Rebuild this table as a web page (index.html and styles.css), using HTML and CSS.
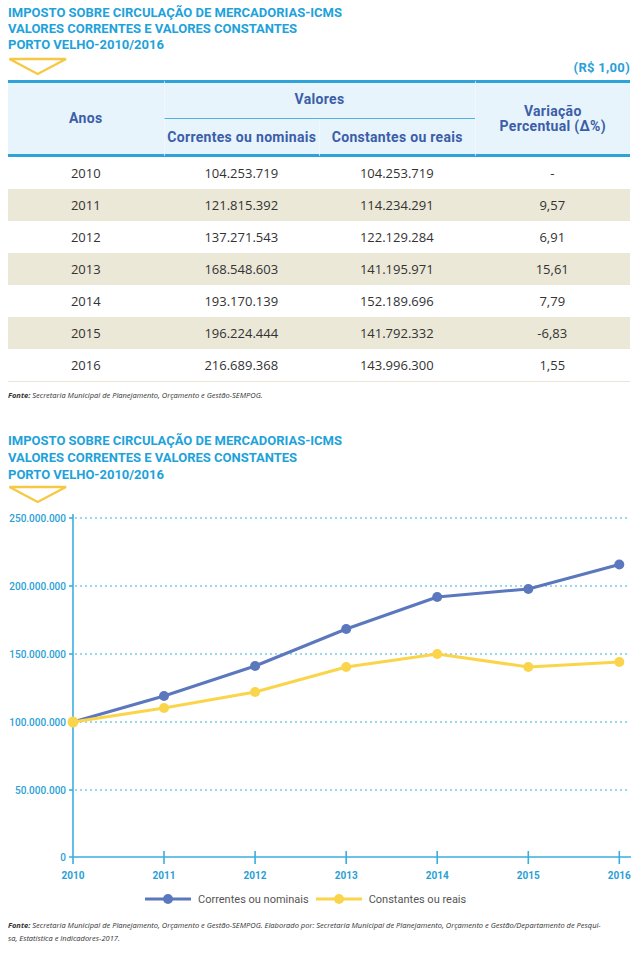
FILE: index.html
```html
<!DOCTYPE html>
<html lang="pt-BR">
<head>
<meta charset="utf-8">
<title>ICMS Porto Velho 2010/2016</title>
<link rel="stylesheet" href="styles.css">
</head>
<body>
<div class="page">
  <section class="block">
    <h1 class="title">IMPOSTO SOBRE CIRCULAÇÃO DE MERCADORIAS-ICMS<br>VALORES CORRENTES E VALORES CONSTANTES<br>PORTO VELHO-2010/2016</h1>
    <div class="marker-row">
      <svg class="marker" width="60" height="20" viewBox="0 0 60 20"><polygon points="1.5,2 58,2 29.7,17" fill="none" stroke="#f6c843" stroke-width="2.4"/></svg>
      <span class="unit">(R$ 1,00)</span>
    </div>
    <table class="data">
      <thead>
        <tr class="h1">
          <th rowspan="2" class="first">Anos</th>
          <th colspan="2" class="group"><span>Valores</span></th>
          <th rowspan="2">Variação<br>Percentual (Δ%)</th>
        </tr>
        <tr class="h2">
          <th>Correntes ou nominais</th>
          <th>Constantes ou reais</th>
        </tr>
      </thead>
      <tbody>
        <tr><td>2010</td><td>104.253.719</td><td>104.253.719</td><td>-</td></tr>
        <tr class="alt"><td>2011</td><td>121.815.392</td><td>114.234.291</td><td>9,57</td></tr>
        <tr><td>2012</td><td>137.271.543</td><td>122.129.284</td><td>6,91</td></tr>
        <tr class="alt"><td>2013</td><td>168.548.603</td><td>141.195.971</td><td>15,61</td></tr>
        <tr><td>2014</td><td>193.170.139</td><td>152.189.696</td><td>7,79</td></tr>
        <tr class="alt"><td>2015</td><td>196.224.444</td><td>141.792.332</td><td>-6,83</td></tr>
        <tr class="last"><td>2016</td><td>216.689.368</td><td>143.996.300</td><td>1,55</td></tr>
      </tbody>
    </table>
    <p class="source"><b>Fonte:</b> Secretaria Municipal de Planejamento, Orçamento e Gestão-SEMPOG.</p>
  </section>

  <section class="block chart-block">
    <h2 class="title title2">IMPOSTO SOBRE CIRCULAÇÃO DE MERCADORIAS-ICMS<br>VALORES CORRENTES E VALORES CONSTANTES<br>PORTO VELHO-2010/2016</h2>
    <svg class="marker marker2" width="60" height="20" viewBox="0 0 60 20"><polygon points="1.5,2 58,2 29.7,17" fill="none" stroke="#f6c843" stroke-width="2.4"/></svg>
    <svg class="chart" width="622" height="380" viewBox="8 505 622 380">
      <g class="grid" stroke="#3aaede" stroke-width="1" stroke-dasharray="2 3">
        <line x1="75" y1="518" x2="630" y2="518"/>
        <line x1="75" y1="586" x2="630" y2="586"/>
        <line x1="75" y1="654" x2="630" y2="654"/>
        <line x1="75" y1="722" x2="630" y2="722"/>
        <line x1="75" y1="790" x2="630" y2="790"/>
      </g>
      <g stroke="#3aaede" stroke-width="1.6">
        <line x1="73" y1="514" x2="73" y2="864"/>
        <line x1="69" y1="857" x2="631" y2="857"/>
        <line x1="69" y1="518" x2="73" y2="518"/>
        <line x1="69" y1="586" x2="73" y2="586"/>
        <line x1="69" y1="654" x2="73" y2="654"/>
        <line x1="69" y1="722" x2="73" y2="722"/>
        <line x1="69" y1="790" x2="73" y2="790"/>
        <line x1="164" y1="851" x2="164" y2="864"/>
        <line x1="255.1" y1="851" x2="255.1" y2="864"/>
        <line x1="346.2" y1="851" x2="346.2" y2="864"/>
        <line x1="437.2" y1="851" x2="437.2" y2="864"/>
        <line x1="528.3" y1="851" x2="528.3" y2="864"/>
        <line x1="619.3" y1="851" x2="619.3" y2="864"/>
      </g>
      <g class="ylab" text-anchor="end">
        <text x="66" y="521.5">250.000.000</text>
        <text x="66" y="589.5">200.000.000</text>
        <text x="66" y="657.5">150.000.000</text>
        <text x="66" y="725.5">100.000.000</text>
        <text x="66" y="793.5">50.000.000</text>
        <text x="66" y="860.5">0</text>
      </g>
      <g class="xlab" text-anchor="middle">
        <text x="73" y="879">2010</text>
        <text x="164" y="879">2011</text>
        <text x="255.1" y="879">2012</text>
        <text x="346.2" y="879">2013</text>
        <text x="437.2" y="879">2014</text>
        <text x="528.3" y="879">2015</text>
        <text x="619.3" y="879">2016</text>
      </g>
      <g class="series-blue">
        <polyline points="73,722 164,696 255.1,666 346.2,629 437.2,597 528.3,589 619.3,564.5" fill="none" stroke="#5b77bd" stroke-width="3" stroke-linejoin="round"/>
        <g fill="#5b77bd">
          <circle cx="164" cy="696" r="5"/>
          <circle cx="255.1" cy="666" r="5"/>
          <circle cx="346.2" cy="629" r="5"/>
          <circle cx="437.2" cy="597" r="5"/>
          <circle cx="528.3" cy="589" r="5"/>
          <circle cx="619.3" cy="564.5" r="5"/>
        </g>
      </g>
      <g class="series-yellow">
        <polyline points="73,722 164,708 255.1,692 346.2,667 437.2,654 528.3,667 619.3,662" fill="none" stroke="#fad54b" stroke-width="3" stroke-linejoin="round"/>
        <g fill="#fad54b">
          <circle cx="73" cy="722" r="5.5"/>
          <circle cx="164" cy="708" r="5"/>
          <circle cx="255.1" cy="692" r="5"/>
          <circle cx="346.2" cy="667" r="5"/>
          <circle cx="437.2" cy="654" r="5"/>
          <circle cx="528.3" cy="667" r="5"/>
          <circle cx="619.3" cy="662" r="5"/>
        </g>
      </g>
    </svg>
    <div class="legend">
      <div class="legend-item">
        <svg width="46" height="12" viewBox="0 0 46 12"><line x1="0" y1="6" x2="46" y2="6" stroke="#5b77bd" stroke-width="3"/><circle cx="23" cy="6" r="5" fill="#5b77bd"/></svg>
        <span>Correntes ou nominais</span>
      </div>
      <div class="legend-item">
        <svg width="46" height="12" viewBox="0 0 46 12"><line x1="0" y1="6" x2="46" y2="6" stroke="#fad54b" stroke-width="3"/><circle cx="23" cy="6" r="5" fill="#fad54b"/></svg>
        <span>Constantes ou reais</span>
      </div>
    </div>
    <p class="source source2"><b>Fonte:</b> Secretaria Municipal de Planejamento, Orçamento e Gestão-SEMPOG. Elaborado por: Secretaria Municipal de Planejamento, Orçamento e Gestão/Departamento de Pesqui-<br>sa, Estatística e Indicadores-2017.</p>
  </section>
</div>
</body>
</html>
```

FILE: styles.css
```css
html, body {
  margin: 0;
  padding: 0;
  background: #ffffff;
}

.page {
  width: 622px;
  padding: 5px 12px 0 8px;
  font-family: "Open Sans", "Liberation Sans", sans-serif;
  color: #333333;
}

.title {
  margin: 0;
  font-family: Roboto, "Liberation Sans", sans-serif;
  font-weight: 700;
  font-size: 13px;
  line-height: 16px;
  color: #1ea2da;
  letter-spacing: 0;
}

.marker-row {
  display: flex;
  justify-content: space-between;
  align-items: flex-start;
  height: 27px;
}

.marker {
  display: block;
  margin-top: 4px;
}

.unit {
  margin-top: 8px;
  font-family: Roboto, "Liberation Sans", sans-serif;
  font-weight: 700;
  font-size: 13px;
  line-height: 14px;
  color: #2aa0d8;
  letter-spacing: 0.3px;
}

.data {
  width: 622px;
  border-collapse: separate;
  border-spacing: 0;
  table-layout: fixed;
}

.data th {
  background: #e7f4fb;
  font-family: Roboto, "Liberation Sans", sans-serif;
  font-weight: 700;
  font-size: 14px;
  line-height: 15px;
  letter-spacing: 0.3px;
  color: #3c5da8;
  text-align: center;
  padding: 0;
  border-left: 1px solid #eef8fd;
}

.data th.first {
  border-left: none;
}

.data .h1 th {
  border-top: 3px solid #2ea3d9;
  height: 36px;
}

.data th[rowspan] {
  border-bottom: 3px solid #2ea3d9;
}

.data .h2 th {
  border-bottom: 3px solid #2ea3d9;
  height: 34px;
  padding-top: 1px;
}

.data th.group {
  border-bottom: 1px solid #4fb3e0;
  height: 35px;
}

.data th.group span {
  position: relative;
  top: -1px;
}

.data td {
  height: 32px;
  padding: 0;
  text-align: center;
  font-size: 13px;
  color: #333333;
}

.data tr.alt td {
  background: #ebe8d8;
}

.data tr.last td {
  border-bottom: 1px solid #e9e5d5;
}

.source {
  margin: 8px 0 0;
  font-family: "Open Sans", "Liberation Sans", sans-serif;
  font-style: italic;
  font-size: 7.5px;
  line-height: 10px;
  color: #333333;
}

.source b {
  font-weight: 700;
}

.chart-block {
  margin-top: 32px;
}

.title2 {
  line-height: 17px;
}

.marker2 {
  margin-top: 2px;
}

.chart {
  display: block;
  overflow: visible;
}

.ylab text {
  font-family: Roboto, "Liberation Sans", sans-serif;
  font-size: 10px;
  font-weight: 500;
  fill: #2a9fd6;
}

.xlab text {
  font-family: Roboto, "Liberation Sans", sans-serif;
  font-size: 10px;
  font-weight: 700;
  fill: #2a9fd6;
}

.legend {
  display: flex;
  align-items: center;
  height: 28px;
  margin-left: 137px;
  gap: 7px;
}

.legend-item {
  display: flex;
  align-items: center;
  gap: 7px;
}

.legend-item svg {
  display: block;
}

.legend-item span {
  font-family: Roboto, "Liberation Sans", sans-serif;
  font-size: 11px;
  color: #555555;
}

.source2 {
  margin-top: 6px;
  line-height: 13px;
}
```
